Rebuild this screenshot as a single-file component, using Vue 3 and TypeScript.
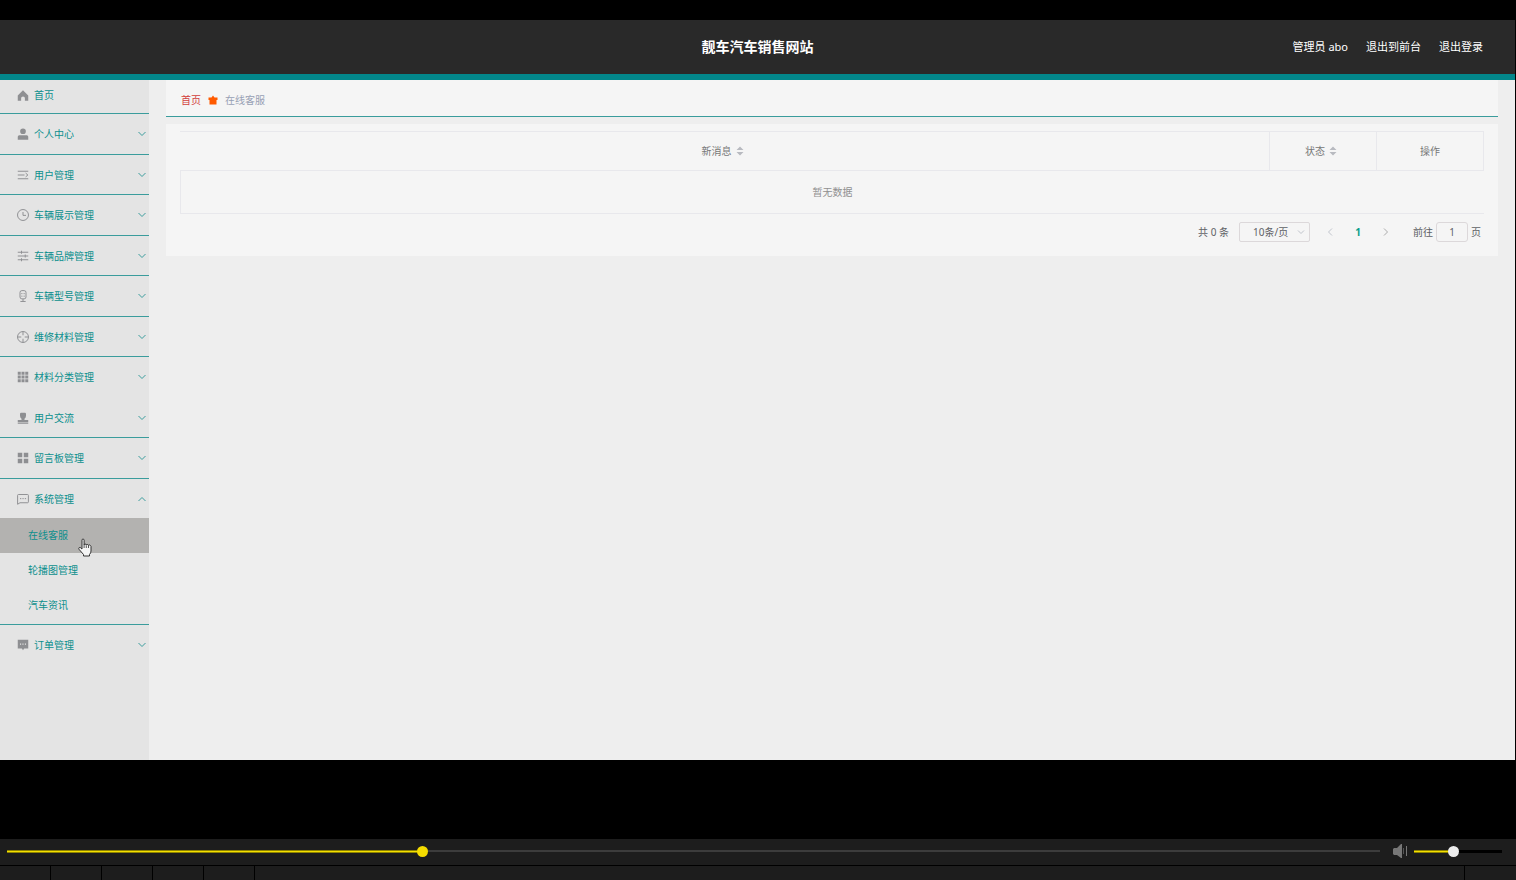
<script setup lang="ts">
import { ref } from 'vue'

interface Glyph {
  fill?: string
  stroke?: string
}

interface MenuEntry {
  label: string
  icon: Glyph
  children?: string[]
  leaf?: boolean
  plain?: boolean
}

const menu: MenuEntry[] = [
  { label: '首页', leaf: true, icon: { fill: 'M8 1.500 1 8.500V15.500h4.500V12q0-2 2.500-2t2.500 2v3.500H15V8.500z' } },
  { label: '个人中心', icon: { fill: 'M8 0.500a3.800 3.800 0 1 1 0 7.600a3.800 3.800 0 0 1 0-7.600zM1 15.500V11.500q0-2 2-2h10q2 0 2 2v4z' } },
  { label: '用户管理', icon: { stroke: 'M1 3h14M1 8h9M1 13h14M11.500 5.500l3 2.500-3 2.500' } },
  { label: '车辆展示管理', icon: { stroke: 'M8 0.700a7.300 7.300 0 1 1 0 14.600a7.300 7.300 0 0 1 0-14.600zM8 4v4.500h4' } },
  { label: '车辆品牌管理', icon: { stroke: 'M1 3h14M1 8h14M1 13h14M6 1v4M11 6v4M6 11v4' } },
  { label: '车辆型号管理', icon: { stroke: 'M6.500 0.800h3q2.500 0 2.500 2.500v6q0 2.500-2.500 2.500h-3Q4 11.800 4 9.300v-6Q4 0.800 6.500 0.800zM8 12v3M4.500 15.300h7M6.500 4v1.500M9.500 4v1.500M6.500 7.500V9M9.500 7.500V9' } },
  { label: '维修材料管理', icon: { stroke: 'M8 0.700a7.300 7.300 0 1 1 0 14.600a7.300 7.300 0 0 1 0-14.600zM8 0.700v5M8 10.300v5M0.700 8h5M10.300 8h5' } },
  { label: '材料分类管理', plain: true, icon: { fill: 'M1 1h4v4H1zM6 1h4v4H6zM11 1h4v4h-4zM1 6h4v4H1zM6 6h4v4H6zM11 6h4v4h-4zM1 11h4v4H1zM6 11h4v4H6zM11 11h4v4h-4z' } },
  { label: '用户交流', icon: { fill: 'M5.500 1h5q1.500 0 1.500 1.500V5q0 2.500-2 4v1.500h5V13.500H1v-3h5V9Q4 7.500 4 5V2.500Q4 1 5.500 1zM1 14.300h14v1.200H1z' } },
  { label: '留言板管理', icon: { fill: 'M1 1h6v6H1zM9 1h6v6H9zM1 9h6v6H1zM9 9h6v6H9z' } },
  {
    label: '系统管理',
    plain: true,
    children: ['在线客服', '轮播图管理', '汽车资讯'],
    icon: { stroke: 'M2 2h12q1.200 0 1.200 1.200v8.600Q15.200 13 14 13H4l-3.200 2V3.200Q0.800 2 2 2zM4 7.500h1.700M7.200 7.500h1.700M10.400 7.500h1.700' },
  },
  { label: '订单管理', plain: true, icon: { fill: 'M1 1h14v11.500H9.500L8 15l-1.500-2.500H1zM4 6v1.500h1.500V6zM7.200 6v1.500h1.500V6zM10.500 6v1.500H12V6z' } },
]

const current = ref('在线客服')
const opened = ref('系统管理')
const pageSize = ref('10条/页')
const jump = ref('1')
const seek = ref(301)
const volume = ref(44)
const tools = ['播放', '停止', '上一个', '下一个', '打开']

function toggle(label: string) {
  opened.value = opened.value === label ? '' : label
}
</script>

<template>
  <div class="stage">
    <div class="screen">
      <header class="top">
        <h1>靓车汽车销售网站</h1>
        <nav class="account">
          <span>管理员 abo</span>
          <a href="#front">退出到前台</a>
          <a href="#logout">退出登录</a>
        </nav>
      </header>

      <div class="body">
        <aside class="side">
          <ul class="menu">
            <li v-for="item in menu" :key="item.label" class="entry">
              <button
                type="button"
                class="row"
                :class="{ leaf: item.leaf, plain: item.plain, open: item.children && opened === item.label }"
                @click="toggle(item.label)"
              >
                <svg class="icon" viewBox="0 0 16 16" aria-hidden="true">
                  <path v-if="item.icon.fill" :d="item.icon.fill" fill="currentColor" fill-rule="evenodd" />
                  <path v-else :d="item.icon.stroke" fill="none" stroke="currentColor" stroke-width="1.3" />
                </svg>
                <span class="label">{{ item.label }}</span>
                <svg v-if="!item.leaf" class="arrow" viewBox="0 0 8 8" aria-hidden="true">
                  <path :d="item.children && opened === item.label ? 'M0.5 6 4 2.500 7.500 6' : 'M0.5 2 4 5.500 7.500 2'" />
                </svg>
              </button>
              <ul v-if="item.children && opened === item.label" class="sub">
                <li v-for="child in item.children" :key="child">
                  <a href="#" :class="{ active: child === current }" @click.prevent="current = child">
                    {{ child }}
                    <svg v-if="child === current" class="hand" viewBox="0 0 14 19" aria-hidden="true">
                      <path
                        d="M4 11V2.200Q4 1 5 1t1.100 1.200V7q0-1 1-1t1.200 1.200q0-1 1-.8t1.200 1.200q0-1 1-.7t1.500 1.500V13q0 2-1.500 3.500V18H5.500v-1.500L1.200 11.500Q0.300 10 1.300 9.500T3 10.200z"
                        fill="#f4f4f4"
                        stroke="#333"
                      />
                      <path d="M6.100 7v3M8.300 7.500v2.500M10.500 8v2" fill="none" stroke="#555" />
                    </svg>
                  </a>
                </li>
              </ul>
            </li>
          </ul>
        </aside>

        <main class="main">
          <nav class="crumbs">
            <a href="#home">首页</a>
            <svg viewBox="0 0 10 10" aria-hidden="true">
              <path d="M5 0.500 6.500 2.500H9.500V5H8.500V9.500h-7V5H0.500V2.500h3z" fill="#ff5a00" />
            </svg>
            <span>在线客服</span>
          </nav>

          <section class="panel">
            <table>
              <colgroup>
                <col />
                <col class="narrow" />
                <col class="narrow" />
              </colgroup>
              <thead>
                <tr>
                  <th scope="col">
                    <span class="sort">新消息
                      <svg viewBox="0 0 8 10" aria-hidden="true"><path d="M4 0.500 7.500 4h-7zM0.500 6h7L4 9.500z" /></svg>
                    </span>
                  </th>
                  <th scope="col">
                    <span class="sort">状态
                      <svg viewBox="0 0 8 10" aria-hidden="true"><path d="M4 0.500 7.500 4h-7zM0.500 6h7L4 9.500z" /></svg>
                    </span>
                  </th>
                  <th scope="col">操作</th>
                </tr>
              </thead>
              <tbody>
                <tr>
                  <td colspan="3">暂无数据</td>
                </tr>
              </tbody>
            </table>

            <div class="pager">
              <span>共 0 条</span>
              <span class="size">
                <select v-model="pageSize" aria-label="每页条数">
                  <option>10条/页</option>
                  <option>20条/页</option>
                </select>
                <svg viewBox="0 0 8 8" aria-hidden="true"><path d="M1 2.500 4 5.500 7 2.500" /></svg>
              </span>
              <div class="pages">
                <button type="button" class="step prev" aria-label="上一页" disabled>
                  <svg viewBox="0 0 8 8" aria-hidden="true"><path d="M6 0.500 2.500 4 6 7.500" /></svg>
                </button>
                <button type="button" class="num">1</button>
                <button type="button" class="step" aria-label="下一页">
                  <svg viewBox="0 0 8 8" aria-hidden="true"><path d="M2 0.500 5.500 4 2 7.500" /></svg>
                </button>
              </div>
              <label class="jump">前往<input v-model="jump" type="text" />页</label>
            </div>
          </section>
        </main>
      </div>
    </div>

    <footer class="player">
      <div class="controls">
        <input
          v-model="seek"
          class="seek"
          type="range"
          min="0"
          max="1000"
          aria-label="进度"
          :style="{ '--done': seek / 10 + '%' }"
        />
        <button type="button" class="mute" aria-label="静音">
          <svg viewBox="0 0 15 14" aria-hidden="true">
            <path d="M0 5l1-1h3l4-4h1v14H8l-4-3H1l-1-1z" fill="#777" />
            <path d="M10.500 4v6" stroke="#555" />
            <path d="M13.500 2v10" stroke="#777" />
          </svg>
        </button>
        <input
          v-model="volume"
          class="volume"
          type="range"
          min="0"
          max="100"
          aria-label="音量"
          :style="{ '--done': volume + '%' }"
        />
      </div>
      <div class="tools">
        <button v-for="tool in tools" :key="tool" type="button" :aria-label="tool"></button>
        <button type="button" class="last" aria-label="全屏"></button>
      </div>
    </footer>
  </div>
</template>

<style>
body {
  margin: 0;
  background: #000;
}
</style>

<style scoped>
* {
  box-sizing: border-box;
}

.stage {
  display: flex;
  flex-direction: column;
  min-height: 100vh;
  padding-top: 20px;
  background: #000;
  font-family: 'Noto Sans', 'Noto Sans CJK SC', sans-serif;
  font-size: 10px;
  line-height: 16px;
}

button,
input,
select {
  margin: 0;
  padding: 0;
  border: 0;
  background: none;
  color: inherit;
  font: inherit;
}

a {
  color: inherit;
  text-decoration: none;
}

ul {
  margin: 0;
  padding: 0;
  list-style: none;
}

.screen {
  display: flex;
  flex: 1;
  flex-direction: column;
  margin: 0 1px 79px 0;
  background: #eee;
}

.top {
  display: grid;
  grid-template-columns: 1fr auto 1fr;
  align-items: center;
  height: 60px;
  padding: 0 32px;
  border-bottom: 6px solid #02868a;
  background: #292929;
  color: #fff;
}

h1 {
  grid-column: 2;
  margin: 0;
  font-size: 14px;
  font-weight: 700;
  line-height: 20px;
}

.account {
  display: flex;
  justify-content: flex-end;
  gap: 18px;
  font-size: 11px;
}

.body {
  display: flex;
  flex: 1;
}

.side {
  width: 149px;
  flex: none;
  background: #e4e4e4;
  color: #0b8f8d;
}

.row {
  display: flex;
  align-items: center;
  width: 100%;
  height: 40px;
  padding: 0 3px 0 17px;
  border-bottom: 1px solid #3a9c9c;
  text-align: left;
  cursor: pointer;
}

.entry:nth-child(even) .row {
  height: 41px;
}

.row.leaf {
  height: 34px;
  padding-bottom: 4px;
}

.row.plain {
  border-bottom-color: transparent;
}

.entry .row.open {
  height: 39px;
  border-bottom: 0;
}

.icon {
  width: 12px;
  height: 12px;
  margin-right: 5px;
  color: #8e8f92;
}

.label {
  flex: 1;
}

.arrow {
  width: 8px;
  height: 8px;
}

.arrow path {
  fill: none;
  stroke: #3a9c9c;
}

.pager path {
  fill: none;
  stroke: currentColor;
}

.sub {
  padding-bottom: 1px;
  border-bottom: 1px solid #3a9c9c;
}

.sub a {
  position: relative;
  display: block;
  padding-left: 28px;
  line-height: 35px;
}

.sub a.active {
  background: #b3b2b0;
}

.hand {
  position: absolute;
  top: 20px;
  left: 78px;
  z-index: 1;
  width: 14px;
  height: 19px;
}

.main {
  flex: 1;
  min-width: 0;
  padding: 0 17px;
}

.crumbs {
  display: flex;
  align-items: center;
  height: 37px;
  padding: 3px 15px 0;
  border-bottom: 1px solid #3a9c9c;
  background: #f5f5f5;
  color: #97a0b4;
}

.crumbs a {
  color: #d2403c;
}

.crumbs svg {
  width: 10px;
  height: 10px;
  margin: 0 7px;
}

.panel {
  margin-top: 7px;
  padding: 7px 14px 14px;
  background: #f5f5f5;
  color: #606266;
}

table {
  width: 100%;
  border-spacing: 0;
  table-layout: fixed;
}

.narrow {
  width: 107px;
}

th,
td {
  padding: 0;
  border: 0 solid #e8e8ec;
  font-weight: 400;
  text-align: center;
}

th {
  height: 40px;
  border-width: 1px 1px 1px 0;
  color: #777;
}

td {
  height: 43px;
  border-width: 0 0 1px 1px;
  color: #909090;
}

.sort {
  display: inline-flex;
  align-items: center;
  gap: 4px;
  padding-right: 4px;
}

.sort svg {
  width: 8px;
  height: 10px;
  fill: #b8bac0;
}

.pager {
  display: flex;
  align-items: center;
  justify-content: flex-end;
  height: 20px;
  margin-top: 8px;
  padding-right: 3px;
}

.size {
  position: relative;
  width: 71px;
  margin-left: 10px;
}

.size select {
  display: block;
  width: 100%;
  height: 20px;
  padding-left: 13px;
  border: 1px solid #dcd8da;
  border-radius: 2px;
  appearance: none;
}

.size svg {
  position: absolute;
  top: 6px;
  right: 5px;
  width: 8px;
  height: 8px;
  color: #c0c4cc;
  pointer-events: none;
}

.pages {
  display: flex;
  margin: 0 13px 0 6px;
}

.pages button {
  display: flex;
  align-items: center;
  justify-content: center;
  width: 28px;
  height: 20px;
}

.step svg {
  width: 8px;
  height: 8px;
  color: #aaa;
}

.prev svg {
  color: #c0c4cc;
}

.num {
  color: #0a9d8a;
  font-weight: 700;
}

.jump {
  display: flex;
  align-items: center;
}

.jump input {
  width: 32px;
  height: 20px;
  margin: 0 3px;
  border: 1px solid #dcd8da;
  border-radius: 3px;
  text-align: center;
}

.player {
  background: #1d1d1d;
}

.controls {
  display: flex;
  align-items: center;
  height: 27px;
  padding: 0 14px 2px 7px;
  border-bottom: 1px solid #000;
}

input[type='range'] {
  height: 12px;
  appearance: none;
  background:
    linear-gradient(#8f8400 1px, #f5e000 1px 2px, #8f8400 2px) left center / var(--done) 3px no-repeat,
    linear-gradient(var(--rest), var(--rest)) center / 100% var(--thick) no-repeat;
}

input[type='range']::-webkit-slider-thumb {
  width: 11px;
  height: 11px;
  border-radius: 50%;
  appearance: none;
  background: var(--knob);
}

.seek {
  --rest: #3c3c3c;
  --thick: 2px;
  --knob: #f5dc00;
  flex: 1;
  min-width: 0;
}

.mute {
  width: 15px;
  height: 14px;
  margin: 0 6px 0 13px;
}

.mute svg {
  display: block;
  width: 15px;
  height: 14px;
}

.volume {
  --rest: #000;
  --thick: 3px;
  --knob: #ececec;
  width: 88px;
}

.tools {
  display: flex;
  height: 14px;
}

.tools button {
  width: 51px;
  border-right: 1px solid #000;
}

.tools .last {
  width: 52px;
  margin-left: auto;
  border-right: 0;
  border-left: 1px solid #000;
}
</style>
